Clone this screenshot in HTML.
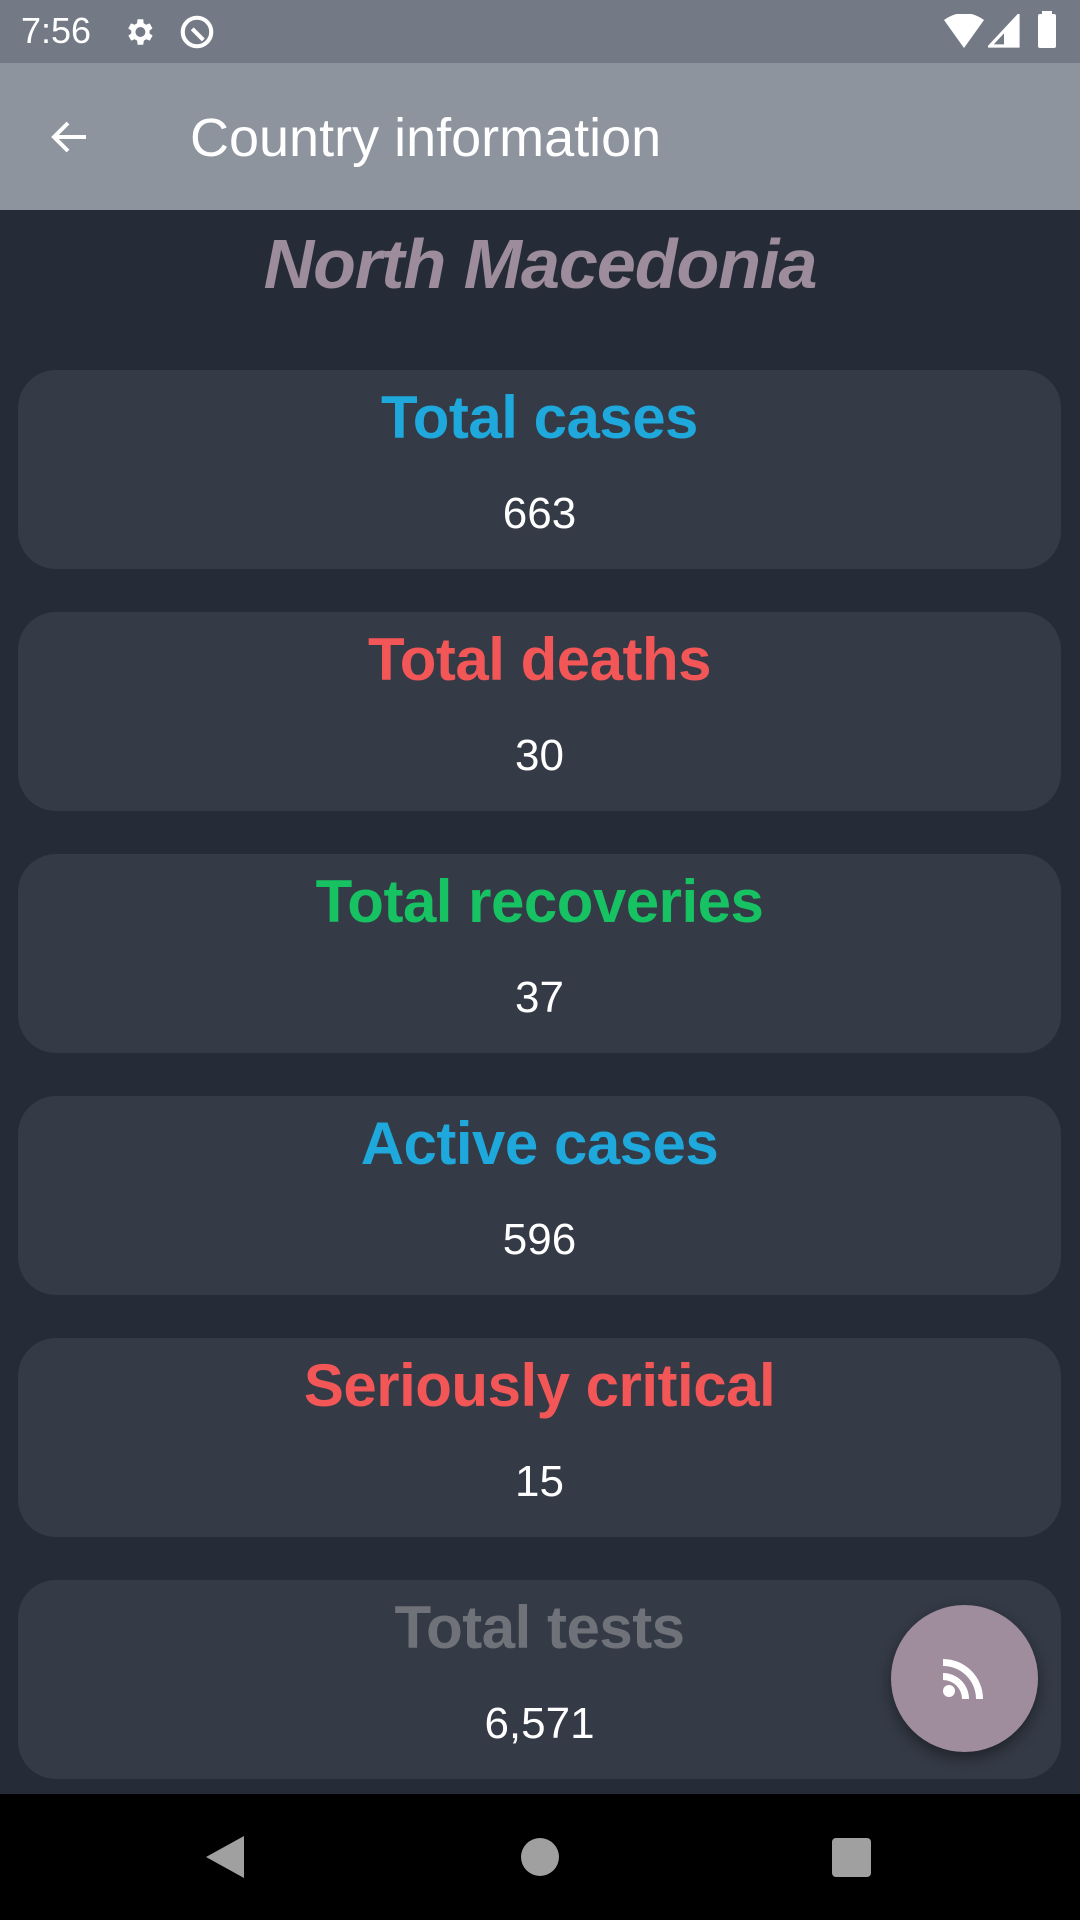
<!DOCTYPE html>
<html><head><meta charset="utf-8"><style>
*{margin:0;padding:0;box-sizing:border-box}
body{width:1080px;height:1920px;background:#262c37;font-family:"Liberation Sans",Roboto,sans-serif;position:relative;overflow:hidden}
.sb{position:absolute;top:0;left:0;width:1080px;height:63px;background:#737a85;color:#fff}
.ab{position:absolute;top:63px;left:0;width:1080px;height:147px;background:#8d949e;color:#fff}
.title{position:absolute;top:224px;width:1080px;text-align:center;font-size:70px;font-weight:bold;font-style:italic;color:#9d8c9c;letter-spacing:-1px}
.card{position:absolute;left:18px;width:1043px;height:199px;background:#343a46;border-radius:38px;text-align:center}
.card .h{position:absolute;top:12px;width:100%;font-size:60px;font-weight:bold;line-height:72px;letter-spacing:-0.5px}
.card .v{position:absolute;top:116px;width:100%;font-size:44px;color:#fff;line-height:56px}
.nav{position:absolute;top:1794px;left:0;width:1080px;height:126px;background:#000}
.fab{position:absolute;left:891px;top:1605px;width:147px;height:147px;border-radius:50%;background:#9f8d9d;box-shadow:0 6px 14px rgba(0,0,0,.4)}
</style></head><body>
<div class="sb">
<div style="position:absolute;left:21px;top:10px;font-size:36px">7:56</div>
<svg style="position:absolute;left:122px;top:15px" width="34" height="34" viewBox="0 0 24 24"><path fill="#fff" d="M19.4 13a7.5 7.5 0 000-2l2.1-1.6-2-3.5-2.5 1a7 7 0 00-1.7-1L15 3h-4l-.4 2.9a7 7 0 00-1.7 1l-2.5-1-2 3.5L6.6 11a7.5 7.5 0 000 2l-2.1 1.6 2 3.5 2.5-1a7 7 0 001.7 1L11 21h4l.4-2.9a7 7 0 001.7-1l2.5 1 2-3.5zM13 15.5a3.5 3.5 0 110-7 3.5 3.5 0 010 7z"/></svg>
<svg style="position:absolute;left:178px;top:13px" width="38" height="38" viewBox="0 0 24 24"><circle cx="12" cy="12" r="9" fill="none" stroke="#fff" stroke-width="2.6"/><path d="M9 10l7 7" stroke="#fff" stroke-width="2.6"/></svg>
<svg style="position:absolute;left:944px;top:14px" width="40" height="34" viewBox="0 0 20 17"><path fill="#fff" d="M0 3Q10-4 20 3L10 17z"/></svg>
<svg style="position:absolute;left:988px;top:14px" width="32" height="34" viewBox="0 0 16 17"><path fill="none" stroke="#fff" stroke-width="1.6" d="M15 1V16H1z"/><path fill="#fff" d="M15 1V16H8V8z"/></svg>
<div style="position:absolute;left:1038px;top:14px;width:18px;height:34px;background:#fff;border-radius:2px"></div>
<div style="position:absolute;left:1042px;top:11px;width:10px;height:4px;background:#fff"></div>
</div>
<div class="ab">
<svg style="position:absolute;left:46px;top:50px" width="48" height="48" viewBox="0 0 24 24"><path d="M20 12H5M11 5l-7 7 7 7" fill="none" stroke="#fff" stroke-width="2"/></svg>
<div style="position:absolute;left:190px;top:44px;font-size:54px">Country information</div>
</div>
<div class="title">North Macedonia</div>
<div class="card" style="top:370px"><div class="h" style="color:#1ea8dc">Total cases</div><div class="v">663</div></div>
<div class="card" style="top:612px"><div class="h" style="color:#f25656">Total deaths</div><div class="v">30</div></div>
<div class="card" style="top:854px"><div class="h" style="color:#16c262">Total recoveries</div><div class="v">37</div></div>
<div class="card" style="top:1096px"><div class="h" style="color:#1ea8dc">Active cases</div><div class="v">596</div></div>
<div class="card" style="top:1338px"><div class="h" style="color:#f25656">Seriously critical</div><div class="v">15</div></div>
<div class="card" style="top:1580px"><div class="h" style="color:#6f7278">Total tests</div><div class="v">6,571</div></div>
<div class="fab"><svg style="position:absolute;left:50px;top:52px" width="44" height="44" viewBox="0 0 44 44"><circle cx="8" cy="34" r="6" fill="#fff"/><path d="M2 2a40 40 0 0140 40h-7A33 33 0 002 9zM2 16a26 26 0 0126 26h-7A19 19 0 002 23z" fill="#fff"/></svg></div>
<div class="nav">
<svg style="position:absolute;left:204px;top:40px" width="42" height="46" viewBox="0 0 42 46"><path d="M40 2V44L2 23z" fill="#a0a0a0"/></svg>
<div style="position:absolute;left:521px;top:44px;width:38px;height:38px;border-radius:50%;background:#a0a0a0"></div>
<div style="position:absolute;left:832px;top:44px;width:39px;height:39px;border-radius:4px;background:#a0a0a0"></div>
</div>
</body></html>
